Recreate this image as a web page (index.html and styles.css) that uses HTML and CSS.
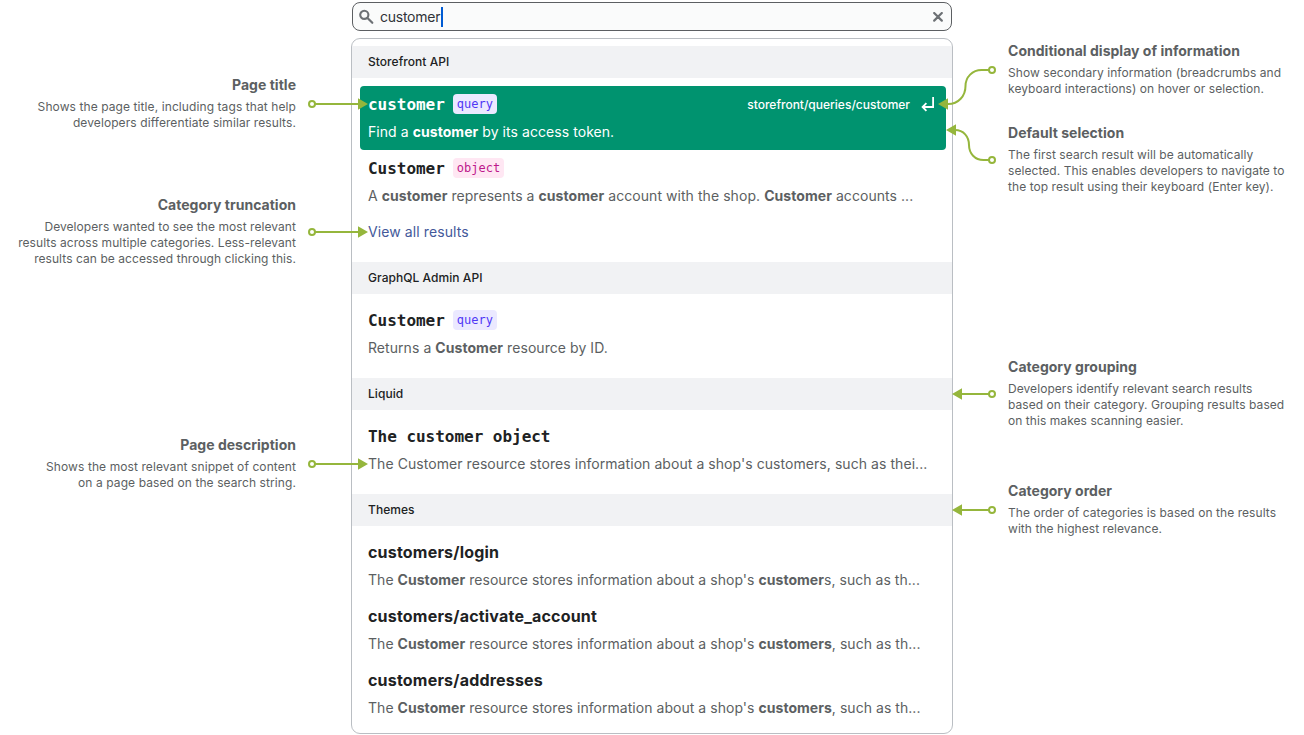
FILE: index.html
```html
<!DOCTYPE html>
<html lang="en">
<head>
<meta charset="utf-8">
<title>Search results anatomy</title>
<link rel="stylesheet" href="styles.css">
</head>
<body>
<main class="board">
  <aside class="notes notes-left">
    <section class="note note-title"><h2>Page title</h2><p>Shows the page title, including tags that help<br>developers differentiate similar results.</p></section>
    <section class="note note-truncation"><h2>Category truncation</h2><p>Developers wanted to see the most relevant<br>results across multiple categories. Less-relevant<br>results can be accessed through clicking this.</p></section>
    <section class="note note-description"><h2>Page description</h2><p>Shows the most relevant snippet of content<br>on a page based on the search string.</p></section>
  </aside>

  <div class="search">
    <div class="field">
      <svg class="icon-search" width="16" height="16" viewBox="0 0 16 16"><circle cx="5.300" cy="5.800" r="4.100" fill="none" stroke="#6d7175" stroke-width="2.100"/><path d="M8.500 9L13.300 13.800" stroke="#6d7175" stroke-width="2.200" stroke-linecap="round"/></svg>
      <span class="typed">customer</span><span class="caret"></span>
      <svg class="icon-clear" width="10" height="10" viewBox="0 0 10 10"><path d="M1.200 1L8.800 8.600M8.800 1L1.200 8.600" stroke="#6d7175" stroke-width="2.200" stroke-linecap="round"/></svg>
    </div>
    <div class="panel">
      <h3 class="category">Storefront API</h3>
      <div class="group">
        <article class="result selected">
          <div class="heading"><span class="name mono">customer</span><span class="tag query">query</span><span class="crumb">storefront/queries/customer</span>
            <svg class="icon-enter" width="14" height="16" viewBox="0 0 14 16"><path d="M12.100 1v10H2M5.400 7.200L1.600 11l3.800 3.800" fill="none" stroke="#fff" stroke-width="1.800"/></svg></div>
          <p>Find a <b>customer</b> by its access token.</p>
        </article>
        <article class="result">
          <div class="heading"><span class="name mono">Customer</span><span class="tag object">object</span></div>
          <p>A <b>customer</b> represents a <b>customer</b> account with the shop. <b>Customer</b> accounts ...</p>
        </article>
        <a class="more">View all results</a>
      </div>
      <h3 class="category">GraphQL Admin API</h3>
      <div class="group">
        <article class="result">
          <div class="heading"><span class="name mono">Customer</span><span class="tag query">query</span></div>
          <p>Returns a <b>Customer</b> resource by ID.</p>
        </article>
      </div>
      <h3 class="category">Liquid</h3>
      <div class="group">
        <article class="result">
          <div class="heading"><span class="name mono">The customer object</span></div>
          <p>The Customer resource stores information about a shop's customers, such as thei...</p>
        </article>
      </div>
      <h3 class="category">Themes</h3>
      <div class="group themes">
        <article class="result">
          <div class="heading"><span class="name">customers/login</span></div>
          <p>The <b>Customer</b> resource stores information about a shop's <b>customer</b>s, such as th...</p>
        </article>
        <article class="result">
          <div class="heading"><span class="name">customers/activate_account</span></div>
          <p>The <b>Customer</b> resource stores information about a shop's <b>customers</b>, such as th...</p>
        </article>
        <article class="result">
          <div class="heading"><span class="name">customers/addresses</span></div>
          <p>The <b>Customer</b> resource stores information about a shop's <b>customers</b>, such as th...</p>
        </article>
      </div>
    </div>
  </div>

  <aside class="notes notes-right">
    <section class="note note-conditional"><h2>Conditional display of information</h2><p>Show secondary information (breadcrumbs and<br>keyboard interactions) on hover or selection.</p></section>
    <section class="note note-default"><h2>Default selection</h2><p>The first search result will be automatically<br>selected. This enables developers to navigate to<br>the top result using their keyboard (Enter key).</p></section>
    <section class="note note-grouping"><h2>Category grouping</h2><p>Developers identify relevant search results<br>based on their category. Grouping results based<br>on this makes scanning easier.</p></section>
    <section class="note note-order"><h2>Category order</h2><p>The order of categories is based on the results<br>with the highest relevance.</p></section>
  </aside>

  <svg class="connectors" width="1304" height="735" viewBox="0 0 1304 735">
    <g fill="none" stroke="#95b63c" stroke-width="2">
      <path d="M315 104H359M315 232H359M315 464H359M961 394H989M961 510H989"/>
      <path d="M989 70h-7.500c-9 0-16 7-16 16c0 10-7 18-17.500 18"/>
      <path d="M989 160h-5.500c-8.500 0-14.500-6.500-14.500-15s-5.500-15-14-15"/>
      <g fill="#fff"><circle cx="312" cy="104" r="3"/><circle cx="312" cy="232" r="3"/><circle cx="312" cy="464" r="3"/><circle cx="992" cy="70" r="3"/><circle cx="992" cy="160" r="3"/><circle cx="992" cy="394" r="3"/><circle cx="992" cy="510" r="3"/></g>
    </g>
    <path fill="#95b63c" d="M358 98.200v11.600L368 104zM358 226.200v11.600L368 232zM358 458.200v11.600L368 464zM948 98.200v11.600L938 104zM956 124.200v11.600L946 130zM962 388.200v11.600L952 394zM962 504.200v11.600L952 510z"/>
  </svg>
</main>
</body>
</html>
```
FILE: styles.css
```css
* { box-sizing: border-box; }
body { margin: 0; background: #fff; font-family: Inter, sans-serif; color: #5c5f62; }
h2, h3, p { margin: 0; }
.board { position: relative; width: 1304px; height: 735px; overflow: hidden; display: grid; grid-template-columns: 296px 602px 296px; column-gap: 55px; }

.notes { display: flex; flex-direction: column; }
.notes-left { text-align: right; }
.note { white-space: nowrap; }
.note h2 { font-size: 14px; line-height: 20px; font-weight: 700; letter-spacing: 0.02px; }
.note p { font-size: 12px; line-height: 16px; margin-top: 4px; letter-spacing: 0.06px; }
.notes-left .note { display: flex; flex-direction: column; align-items: flex-end; }
.note-title { margin-top: 75px; }
.note-truncation { margin-top: 64px; }
.note-description { margin-top: 168px; }
.note-title p, .note-description p { letter-spacing: 0.09px; }
.note-conditional { margin-top: 41px; }
.note-default { margin-top: 26px; }
.note-grouping { margin-top: 162px; }
.note-order { margin-top: 52px; }

.search { padding-top: 2px; }
.field { display: flex; align-items: center; width: 600px; height: 29px; margin: 0 1px 7px; padding: 0 8px 0 6px; border: 1px solid #5c5f62; border-radius: 8px; background: #fafbfb; }
.typed { margin-left: 5px; font-size: 14px; line-height: 20px; letter-spacing: -0.25px; color: #303338; }
.caret { width: 2px; height: 20px; margin-left: 1px; background: #005bd3; }
.icon-clear { margin-left: auto; }

.panel { height: 696px; padding-top: 7px; border: 1px solid #babec3; border-radius: 9px; overflow: hidden; }
.category { height: 32px; padding-left: 16px; background: #f1f2f4; font-size: 12px; line-height: 32px; font-weight: 450; letter-spacing: 0.05px; color: #202223; }
.group { padding: 8px 6px 12px 8px; }
.result { height: 64px; padding: 8px; border-radius: 4px; }
.heading { display: flex; align-items: center; height: 20px; }
.name { font-size: 16px; font-weight: 700; letter-spacing: 0.2px; color: #202223; white-space: pre; }
.mono { font-family: "DejaVu Sans Mono", monospace; font-weight: 700; letter-spacing: -0.03px; }
.tag { height: 20px; margin-left: 8px; padding: 0 4px; border-radius: 4px; font: 12px/20px "DejaVu Sans Mono", monospace; }
.query { background: #ebe9ff; color: #5038f5; }
.object { background: #ffe7f3; color: #bd188c; }
.result p { margin-top: 8px; font-size: 14px; line-height: 20px; letter-spacing: 0.06px; white-space: nowrap; }
.themes .result p { letter-spacing: 0.04px; }
.result b { font-weight: 700; }
.selected { background: #00936f; color: #fff; }
.selected .name { color: #fff; }
.crumb { margin-left: auto; font-size: 12px; font-weight: 500; }
.icon-enter { margin: 0 3px 0 11px; }
.more { display: block; padding: 8px; font-size: 14px; line-height: 20px; letter-spacing: 0.1px; color: #44599a; }

.connectors { position: absolute; left: 0; top: 0; pointer-events: none; }
```
